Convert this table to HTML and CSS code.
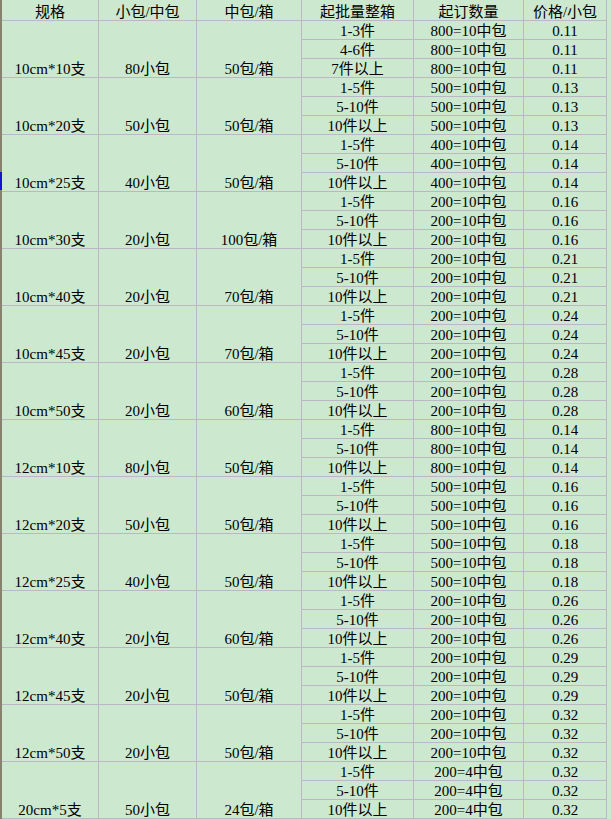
FILE: index.html
```html
<!DOCTYPE html>
<html lang="zh-CN">
<head>
<meta charset="utf-8">
<title>价格表</title>
<link rel="stylesheet" href="styles.css">
</head>
<body>
<div class="sheet">
<table class="grid">
<colgroup>
<col class="c1"><col class="c2"><col class="c3"><col class="c4"><col class="c5"><col class="c6">
</colgroup>
<thead>
<tr class="head"><th>规格</th><th>小包/中包</th><th>中包/箱</th><th>起批量整箱</th><th>起订数量</th><th>价格/小包</th></tr>
</thead>
<tbody>
<tr><td rowspan="3" class="m">10cm*10支</td><td rowspan="3" class="m">80小包</td><td rowspan="3" class="m">50包/箱</td><td>1-3件</td><td>800=10中包</td><td>0.11</td></tr>
<tr><td>4-6件</td><td>800=10中包</td><td>0.11</td></tr>
<tr><td>7件以上</td><td>800=10中包</td><td>0.11</td></tr>

<tr><td rowspan="3" class="m">10cm*20支</td><td rowspan="3" class="m">50小包</td><td rowspan="3" class="m">50包/箱</td><td>1-5件</td><td>500=10中包</td><td>0.13</td></tr>
<tr><td>5-10件</td><td>500=10中包</td><td>0.13</td></tr>
<tr><td>10件以上</td><td>500=10中包</td><td>0.13</td></tr>

<tr><td rowspan="3" class="m">10cm*25支</td><td rowspan="3" class="m">40小包</td><td rowspan="3" class="m">50包/箱</td><td>1-5件</td><td>400=10中包</td><td>0.14</td></tr>
<tr><td>5-10件</td><td>400=10中包</td><td>0.14</td></tr>
<tr><td>10件以上</td><td>400=10中包</td><td>0.14</td></tr>

<tr><td rowspan="3" class="m">10cm*30支</td><td rowspan="3" class="m">20小包</td><td rowspan="3" class="m">100包/箱</td><td>1-5件</td><td>200=10中包</td><td>0.16</td></tr>
<tr><td>5-10件</td><td>200=10中包</td><td>0.16</td></tr>
<tr><td>10件以上</td><td>200=10中包</td><td>0.16</td></tr>

<tr><td rowspan="3" class="m">10cm*40支</td><td rowspan="3" class="m">20小包</td><td rowspan="3" class="m">70包/箱</td><td>1-5件</td><td>200=10中包</td><td>0.21</td></tr>
<tr><td>5-10件</td><td>200=10中包</td><td>0.21</td></tr>
<tr><td>10件以上</td><td>200=10中包</td><td>0.21</td></tr>

<tr><td rowspan="3" class="m">10cm*45支</td><td rowspan="3" class="m">20小包</td><td rowspan="3" class="m">70包/箱</td><td>1-5件</td><td>200=10中包</td><td>0.24</td></tr>
<tr><td>5-10件</td><td>200=10中包</td><td>0.24</td></tr>
<tr><td>10件以上</td><td>200=10中包</td><td>0.24</td></tr>

<tr><td rowspan="3" class="m">10cm*50支</td><td rowspan="3" class="m">20小包</td><td rowspan="3" class="m">60包/箱</td><td>1-5件</td><td>200=10中包</td><td>0.28</td></tr>
<tr><td>5-10件</td><td>200=10中包</td><td>0.28</td></tr>
<tr><td>10件以上</td><td>200=10中包</td><td>0.28</td></tr>

<tr><td rowspan="3" class="m">12cm*10支</td><td rowspan="3" class="m">80小包</td><td rowspan="3" class="m">50包/箱</td><td>1-5件</td><td>800=10中包</td><td>0.14</td></tr>
<tr><td>5-10件</td><td>800=10中包</td><td>0.14</td></tr>
<tr><td>10件以上</td><td>800=10中包</td><td>0.14</td></tr>

<tr><td rowspan="3" class="m">12cm*20支</td><td rowspan="3" class="m">50小包</td><td rowspan="3" class="m">50包/箱</td><td>1-5件</td><td>500=10中包</td><td>0.16</td></tr>
<tr><td>5-10件</td><td>500=10中包</td><td>0.16</td></tr>
<tr><td>10件以上</td><td>500=10中包</td><td>0.16</td></tr>

<tr><td rowspan="3" class="m">12cm*25支</td><td rowspan="3" class="m">40小包</td><td rowspan="3" class="m">50包/箱</td><td>1-5件</td><td>500=10中包</td><td>0.18</td></tr>
<tr><td>5-10件</td><td>500=10中包</td><td>0.18</td></tr>
<tr><td>10件以上</td><td>500=10中包</td><td>0.18</td></tr>

<tr><td rowspan="3" class="m">12cm*40支</td><td rowspan="3" class="m">20小包</td><td rowspan="3" class="m">60包/箱</td><td>1-5件</td><td>200=10中包</td><td>0.26</td></tr>
<tr><td>5-10件</td><td>200=10中包</td><td>0.26</td></tr>
<tr><td>10件以上</td><td>200=10中包</td><td>0.26</td></tr>

<tr><td rowspan="3" class="m">12cm*45支</td><td rowspan="3" class="m">20小包</td><td rowspan="3" class="m">50包/箱</td><td>1-5件</td><td>200=10中包</td><td>0.29</td></tr>
<tr><td>5-10件</td><td>200=10中包</td><td>0.29</td></tr>
<tr><td>10件以上</td><td>200=10中包</td><td>0.29</td></tr>

<tr><td rowspan="3" class="m">12cm*50支</td><td rowspan="3" class="m">20小包</td><td rowspan="3" class="m">50包/箱</td><td>1-5件</td><td>200=10中包</td><td>0.32</td></tr>
<tr><td>5-10件</td><td>200=10中包</td><td>0.32</td></tr>
<tr><td>10件以上</td><td>200=10中包</td><td>0.32</td></tr>

<tr><td rowspan="3" class="m">20cm*5支</td><td rowspan="3" class="m">50小包</td><td rowspan="3" class="m">24包/箱</td><td>1-5件</td><td>200=4中包</td><td>0.32</td></tr>
<tr><td>5-10件</td><td>200=4中包</td><td>0.32</td></tr>
<tr><td>10件以上</td><td>200=4中包</td><td>0.32</td></tr>
</tbody>
</table>
<div class="marker"></div>
</div>
</body>
</html>
```

FILE: styles.css
```css
html, body {
  margin: 0;
  padding: 0;
  background: #cce8cf;
}

.sheet {
  position: relative;
  width: 611px;
  height: 819px;
  overflow: hidden;
}

.grid {
  border-collapse: separate;
  border-spacing: 0;
  table-layout: fixed;
  width: 607px;
  border-left: 2px solid #85836d;
  font-family: "Liberation Serif", "Noto Sans CJK SC", serif;
  font-size: 15px;
  color: #000;
}

.c1 { width: 97px; }
.c2 { width: 98px; }
.c3 { width: 105px; }
.c4 { width: 112px; }
.c5 { width: 110px; }
.c6 { width: 83px; }

.grid th,
.grid td {
  padding: 2px 0 0 0;
  height: 16px;
  line-height: 16px;
  font-weight: normal;
  text-align: center;
  vertical-align: bottom;
  white-space: nowrap;
  overflow: hidden;
  border-right: 1px solid #bdb6c6;
  border-bottom: 1px solid #bdb6c6;
}

.grid .head th {
  padding-top: 4px;
  height: 16px;
}

.grid td.m {
  height: auto;
}

.marker {
  position: absolute;
  left: 0;
  top: 172px;
  width: 2px;
  height: 18px;
  background: #1414c8;
}
```
